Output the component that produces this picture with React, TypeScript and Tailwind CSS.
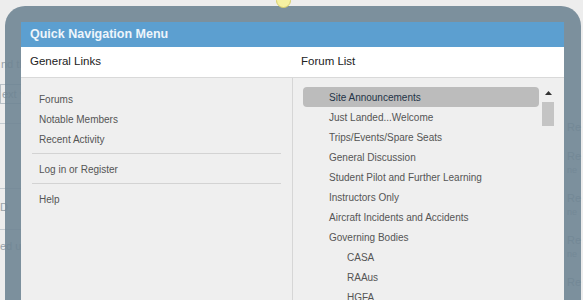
import React from 'react'

const generalLinks = [['Forums', 'Notable Members', 'Recent Activity'], ['Log in or Register'], ['Help']]

const forums: { label: string; sub?: boolean; active?: boolean }[] = [
  { label: 'Site Announcements', active: true },
  { label: 'Just Landed...Welcome' },
  { label: 'Trips/Events/Spare Seats' },
  { label: 'General Discussion' },
  { label: 'Student Pilot and Further Learning' },
  { label: 'Instructors Only' },
  { label: 'Aircraft Incidents and Accidents' },
  { label: 'Governing Bodies' },
  { label: 'CASA', sub: true },
  { label: 'RAAus', sub: true },
  { label: 'HGFA', sub: true },
]

function BackgroundPage() {
  // the forum page that sits under the overlay, barely visible through the frame
  return (
    <div className="flex h-full w-full justify-between text-[11px] text-[#9aa3aa]">
      <div className="w-[40px] pt-[56px]">
        <div className="whitespace-nowrap pl-[1px]">nd the</div>
        <div className="mt-[11px] h-[20px] w-[30px] border border-[#b8c0c6] pl-[1px] leading-[18px]">ext ▾</div>
        <div className="mt-[19px] border-t border-[#c5ccd1]" />
        <div className="mt-[64px] border-t border-[#c5ccd1]" />
        <div className="mt-[10px]">D</div>
        <div className="mt-[14px] border-t border-[#c5ccd1]" />
        <div className="mt-[8px] whitespace-nowrap">ed un</div>
      </div>
      <div className="w-[16px] overflow-hidden pt-[120px] text-[11px] leading-[14px]">
        <div className="pb-[15px]">Re</div>
        <div>Re</div>
        <div className="pb-[14px] text-[9px]">ne</div>
        <div>Re</div>
        <div className="pb-[14px] text-[9px]">ne</div>
        <div>Re</div>
        <div className="pb-[14px] text-[9px]">ne</div>
        <div>Re</div>
      </div>
    </div>
  )
}

function GeneralLinks() {
  return (
    <div className="w-[272px] shrink-0 border-r border-[#d6d6d6] pt-[11px]">
      {generalLinks.map((group, gi) => (
        <div key={gi}>
          {gi > 0 && <div className="mx-[11px] mb-[5px] mt-[4px] border-t border-[#d3d3d3]" />}
          {group.map((l) => (
            <div key={l} className="flex h-[20px] items-center pl-[18px] text-[10px] text-[#555]">
              {l}
            </div>
          ))}
        </div>
      ))}
    </div>
  )
}

function ForumList() {
  return (
    <div className="flex flex-1 pl-[10px] pr-[8px] pt-[9px]">
      <div className="w-[236px] shrink-0">
        {forums.map((f) => (
          <div
            key={f.label}
            className={`flex h-[20px] items-center rounded-[4px] text-[10px] ${f.sub ? 'pl-[44px]' : 'pl-[26px]'} ${
              f.active ? 'bg-[#bcbcbc] text-[#243447]' : 'text-[#555]'
            }`}
          >
            {f.label}
          </div>
        ))}
      </div>
      <div className="flex flex-1 flex-col items-center pl-[1px]">
        <svg width="7" height="4" viewBox="0 0 7 4" className="mt-[4px]">
          <path d="M0 4 L3.5 0 L7 4 Z" fill="#333" />
        </svg>
        <div className="mt-[7px] h-[24px] w-[12px] bg-[#c4c4c4]" />
        <div className="flex-1" />
        <svg width="7" height="4" viewBox="0 0 7 4" className="mb-[7px]">
          <path d="M0 0 L3.5 4 L7 0 Z" fill="#333" />
        </svg>
      </div>
    </div>
  )
}

export default function App() {
  return (
    <div className="relative h-[300px] w-[583px] overflow-hidden bg-[#ededed] font-['Liberation_Sans',sans-serif]">
      <BackgroundPage />

      <div className="absolute left-[5px] top-[6px] h-[330px] w-[576px] rounded-[20px] bg-[#6f8594]/90 pb-4 pl-4 pr-[17px] pt-4">
        <div className="flex h-full flex-col bg-[#efefef]">
          <div className="flex h-[25px] items-center bg-[#5c9fd0] px-[9px] text-[12.5px] font-bold text-[#eef5fb]">
            Quick Navigation Menu
          </div>
          <div className="flex h-[31px] items-center border-b border-[#d9d9d9] bg-white text-[11.5px] text-[#222]">
            <div className="w-[272px] pl-[9px]">General Links</div>
            <div className="pl-[8px]">Forum List</div>
          </div>
          <div className="flex flex-1">
            <GeneralLinks />
            <ForumList />
          </div>
        </div>
      </div>

      <div className="absolute left-[276px] top-[-7px] h-[15px] w-[15px] rounded-full border border-[#d9cf6a] bg-[#f6f1a2]" />
    </div>
  )
}
